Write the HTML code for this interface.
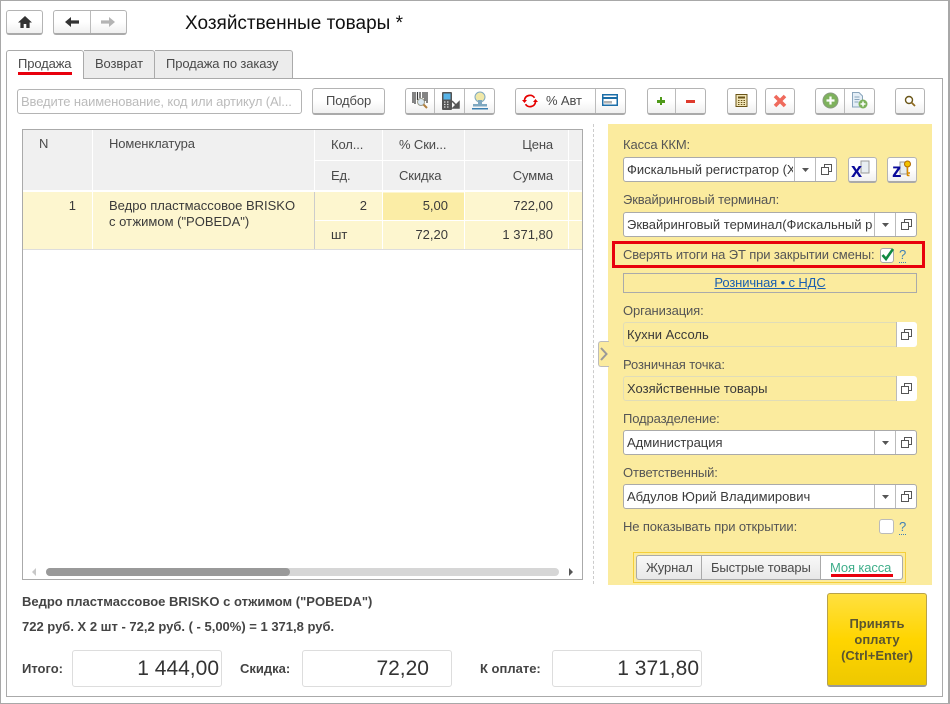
<!DOCTYPE html>
<html lang="ru"><head><meta charset="utf-8"><title>Хозяйственные товары</title>
<style>
html,body{margin:0;padding:0;background:#fff}
#p{position:relative;width:950px;height:704px;overflow:hidden;background:#fff;font:13px "Liberation Sans",sans-serif;color:#4a4a4a}
#p div,#p svg{position:absolute;box-sizing:border-box}
.t{white-space:nowrap;line-height:14px;letter-spacing:-.12px}
.b{border:1px solid #b4b4b4;border-bottom:2px solid #aaa;border-radius:3px;background:linear-gradient(#fff,#fff 50%,#f0f0f0)}
.s{width:1px;background:#bbb}
.f{background:#fff;border:1px solid #aaa;border-radius:3px}
.l{color:#555}
.th{background:#f0f0f0}
#p .c{color:#3a3a3a;letter-spacing:0}
.r{text-align:right}
#p .bd{font-weight:700;color:#444;letter-spacing:0}
#p .n{font-size:21px;line-height:22px;color:#333;letter-spacing:0;text-align:right}
</style></head><body><div id="p">
<div style="left:0;top:0;width:950px;height:704px;border:1px solid #a8a8a8;border-width:1px 2px 1px 1px"></div>

<div class="b" style="left:6px;top:10px;width:37px;height:25px"></div>
<svg style="left:17px;top:15px" width="16" height="14" viewBox="0 0 16 14"><path d="M8 1 L15 7.5 H12.6 V13 H9.3 V9 H6.7 V13 H3.4 V7.5 H1 Z" fill="#333"/></svg>
<div class="b" style="left:53px;top:10px;width:74px;height:25px"></div>
<div class="s" style="left:90px;top:11px;height:22px"></div>
<svg style="left:64px;top:16px" width="16" height="12" viewBox="0 0 16 12"><path d="M1 6 L7 1 V4.4 H15 V7.6 H7 V11 Z" fill="#333"/></svg>
<svg style="left:100px;top:16px" width="16" height="12" viewBox="0 0 16 12"><path d="M15 6 L9 1 V4.4 H1 V7.6 H9 V11 Z" fill="#b4b4b4"/></svg>
<div class="t" style="left:185px;top:13px;font-size:19px;line-height:22px;color:#111;letter-spacing:0">Хозяйственные товары *</div>

<div style="left:6px;top:78px;width:937px;height:619px;border:1px solid #aaa"></div>
<div style="left:6px;top:50px;width:78px;height:29px;background:#fff;border:1px solid #aaa;border-bottom:none;border-radius:3px 3px 0 0"></div>
<div style="left:84px;top:50px;width:71px;height:28px;background:#ececec;border:1px solid #aaa;border-bottom:none;border-left:none;border-radius:0 3px 0 0"></div>
<div style="left:155px;top:50px;width:138px;height:28px;background:#ececec;border:1px solid #aaa;border-bottom:none;border-left:none;border-radius:0 3px 0 0"></div>
<div class="t" style="left:18px;top:57px">Продажа</div>
<div style="left:18px;top:72px;width:54px;height:3px;background:#e8000d"></div>
<div class="t" style="left:95px;top:57px">Возврат</div>
<div class="t" style="left:166px;top:57px">Продажа по заказу</div>

<div class="f" style="left:17px;top:89px;width:285px;height:25px;border-color:#b4b4b4"></div>
<div class="t" style="left:21px;top:95px;color:#bbb">Введите наименование, код или артикул (Al...</div>
<div class="b" style="left:312px;top:88px;width:73px;height:27px"></div>
<div class="t" style="left:326px;top:94px">Подбор</div>

<div class="b" style="left:405px;top:88px;width:90px;height:27px"></div>
<div class="s" style="left:434px;top:89px;height:24px"></div><div class="s" style="left:464px;top:89px;height:24px"></div>
<svg style="left:412px;top:92px" width="17" height="18" viewBox="0 0 17 18"><path d="M1 0v11M3 0v12M5.500 0v8M8 0v6M11 0v6M13 0v9M15 0v11" stroke="#333" stroke-width="1.200"/><circle cx="9" cy="10" r="3.500" fill="#dbe8f2" stroke="#9a9a8a"/><path d="M11.500 12.500L15 16" stroke="#b08040" stroke-width="2"/></svg>
<svg style="left:441px;top:92px" width="20" height="19" viewBox="0 0 20 19"><rect x="1" y="0" width="10" height="18" rx="1" fill="#555"/><rect x="2.500" y="1.500" width="7" height="6" fill="#58b4e8"/><path d="M3 10h1.500M6 10h1.500M3 12.500h1.500M6 12.500h1.500M3 15h1.500M6 15h1.500" stroke="#ddd" stroke-width="1.200"/><path d="M11 9l5 5M18 10v6h-6z" stroke="#555" stroke-width="1.500" fill="#555"/></svg>
<svg style="left:472px;top:91px" width="16" height="19" viewBox="0 0 16 19"><ellipse cx="8" cy="6" rx="5" ry="5" fill="#f0e8a8" stroke="#7fa8c0"/><rect x="6" y="9" width="4" height="4" fill="#7fa8c0"/><rect x="1" y="13" width="14" height="2.500" fill="#7fa8c0"/><rect x="0" y="17" width="16" height="1.500" fill="#3a7fb0"/></svg>

<div class="b" style="left:515px;top:88px;width:111px;height:27px"></div>
<div class="s" style="left:595px;top:89px;height:24px"></div>
<svg style="left:522px;top:93px" width="16" height="16" viewBox="0 0 16 16"><path d="M2.500 7A5.500 5.500 0 0 1 12.500 4.800M13.500 9A5.500 5.500 0 0 1 3.500 11.200" fill="none" stroke="#e60000" stroke-width="1.700"/><path d="M0 7h5L2.500 10zM16 9h-5l2.500-3z" fill="#e60000"/></svg>
<div class="t" style="left:546px;top:94px">% Авт</div>
<svg style="left:602px;top:94px" width="16" height="13" viewBox="0 0 16 13"><rect x=".75" y=".75" width="14.500" height="10.500" fill="#fff" stroke="#1c6ea8" stroke-width="1.500"/><rect x="1" y="3" width="14" height="2" fill="#1c6ea8"/><path d="M3 7v2.500M5 7v2.500M7 7v2.500M9 7v2.500" stroke="#666"/></svg>

<div class="b" style="left:647px;top:88px;width:59px;height:27px"></div>
<div class="s" style="left:675px;top:89px;height:24px"></div>
<div style="left:657px;top:100px;width:8px;height:2.500px;background:#4f9a1a"></div><div style="left:659.700px;top:97px;width:2.500px;height:8px;background:#4f9a1a"></div>
<div style="left:686px;top:100px;width:9px;height:2.500px;background:#de3a2c"></div>

<div class="b" style="left:727px;top:88px;width:30px;height:27px"></div>
<svg style="left:735px;top:94px" width="14" height="14" viewBox="0 0 14 14"><rect x="1" y=".5" width="11" height="12" fill="#f2e6b8" stroke="#6a5418"/><rect x="3" y="2.500" width="7" height="2" fill="#6a5418"/><path d="M3 6.500h1.500M5.800 6.500h1.500M8.500 6.500H10M3 8.500h1.500M5.800 8.500h1.500M8.500 8.500H10M3 10.500h1.500M5.800 10.500h1.500M8.500 10.500H10" stroke="#6a5418"/></svg>
<div class="b" style="left:765px;top:88px;width:30px;height:27px"></div>
<svg style="left:773px;top:94px" width="14" height="14" viewBox="0 0 14 14"><path d="M2 2L12 12M12 2L2 12" stroke="#ef6a5c" stroke-width="3.600"/></svg>

<div class="b" style="left:815px;top:88px;width:60px;height:27px"></div>
<div class="s" style="left:844px;top:89px;height:24px"></div>
<svg style="left:822px;top:92px" width="17" height="17" viewBox="0 0 17 17"><circle cx="8.500" cy="8.500" r="7.500" fill="#7eb25c" stroke="#8a9a80"/><path d="M8.500 4.500v8M4.500 8.500h8" stroke="#fff" stroke-width="2.200"/></svg>
<svg style="left:851px;top:92px" width="17" height="17" viewBox="0 0 17 17"><path d="M1.500.5H8L11.500 4V15H1.500Z" fill="#e4eef6" stroke="#8aa5bc"/><path d="M3.500 5h5M3.500 7.500h5M3.500 10h4" stroke="#8aa5bc"/><circle cx="12" cy="12" r="4.500" fill="#7eb25c"/><path d="M12 9.500v5M9.500 12h5" stroke="#fff" stroke-width="1.500"/></svg>
<div class="b" style="left:895px;top:88px;width:30px;height:27px"></div>
<svg style="left:904px;top:95px" width="12" height="12" viewBox="0 0 12 12"><circle cx="5" cy="5" r="3.500" fill="none" stroke="#6a5618" stroke-width="1.400"/><path d="M7.500 7.500L11 11" stroke="#8f6a20" stroke-width="1.800"/></svg>

<div style="left:22px;top:129px;width:561px;height:451px;border:1px solid #aaa"></div>
<div class="th" style="left:23px;top:130px;width:69px;height:60px"></div>
<div class="th" style="left:93px;top:130px;width:221px;height:60px"></div>
<div class="th" style="left:315px;top:130px;width:67px;height:30px"></div><div class="th" style="left:315px;top:161px;width:67px;height:29px"></div>
<div class="th" style="left:383px;top:130px;width:81px;height:30px"></div><div class="th" style="left:383px;top:161px;width:81px;height:29px"></div>
<div class="th" style="left:465px;top:130px;width:103px;height:30px"></div><div class="th" style="left:465px;top:161px;width:103px;height:29px"></div>
<div class="th" style="left:569px;top:130px;width:13px;height:30px"></div><div class="th" style="left:569px;top:161px;width:13px;height:29px"></div>
<div style="left:23px;top:192px;width:559px;height:57px;background:#fdf6cf"></div>
<div style="left:23px;top:249px;width:559px;height:1px;background:#ddd"></div>
<div style="left:92px;top:192px;width:1px;height:57px;background:#fff"></div>
<div style="left:314px;top:192px;width:1px;height:57px;background:#ccc"></div>
<div style="left:382px;top:192px;width:1px;height:57px;background:#fff"></div>
<div style="left:464px;top:192px;width:1px;height:57px;background:#fff"></div>
<div style="left:568px;top:192px;width:1px;height:57px;background:#fff"></div>
<div style="left:315px;top:220px;width:267px;height:1px;background:#fff"></div>
<div style="left:383px;top:193px;width:81px;height:27px;background:#fbeda6"></div>
<div class="t" style="left:39px;top:137px">N</div>
<div class="t" style="left:109px;top:137px">Номенклатура</div>
<div class="t" style="left:331px;top:138px">Кол...</div>
<div class="t" style="left:399px;top:138px">% Ски...</div>
<div class="t r" style="left:465px;width:88px;top:138px">Цена</div>
<div class="t" style="left:331px;top:169px">Ед.</div>
<div class="t" style="left:399px;top:169px">Скидка</div>
<div class="t r" style="left:465px;width:88px;top:169px">Сумма</div>
<div class="t c r" style="left:23px;width:53px;top:199px">1</div>
<div class="t c" style="left:109px;top:199px">Ведро пластмассовое BRISKO</div>
<div class="t c" style="left:109px;top:215px">с отжимом ("POBEDA")</div>
<div class="t c r" style="left:315px;width:52px;top:199px">2</div>
<div class="t c r" style="left:383px;width:65px;top:199px">5,00</div>
<div class="t c r" style="left:465px;width:88px;top:199px">722,00</div>
<div class="t c" style="left:331px;top:228px">шт</div>
<div class="t c r" style="left:383px;width:65px;top:228px">72,20</div>
<div class="t c r" style="left:465px;width:88px;top:228px">1 371,80</div>
<div style="left:46px;top:568px;width:513px;height:8px;border-radius:4px;background:#d6d6d6"></div>
<div style="left:46px;top:568px;width:244px;height:8px;border-radius:4px;background:#999"></div>
<svg style="left:32px;top:568px" width="5" height="8"><path d="M4 0V8L0 4Z" fill="#c8c8c8"/></svg>
<svg style="left:569px;top:568px" width="5" height="8"><path d="M0 0V8L4 4Z" fill="#555"/></svg>

<div style="left:593px;top:124px;width:0;height:460px;border-left:1px dashed #ccc"></div>
<div style="left:608px;top:124px;width:324px;height:461px;background:#fbeb9e"></div>
<div style="left:598px;top:341px;width:11px;height:26px;background:#fbeb9e;border:1px solid #bbb;border-right:none;border-radius:3px 0 0 3px"></div>
<svg style="left:600px;top:347px" width="8" height="14"><path d="M1 1L6.500 7L1 13" fill="none" stroke="#999" stroke-width="2"/></svg>

<div class="t l" style="left:623px;top:138px">Касса ККМ:</div>
<div class="f" style="left:623px;top:157px;width:214px;height:25px"></div>
<div class="t c" style="left:627px;top:163px;width:166px;overflow:hidden">Фискальный регистратор (ХЗ)</div>
<div class="s" style="left:794px;top:158px;height:23px"></div><div class="s" style="left:815px;top:158px;height:23px"></div>
<svg style="left:802px;top:168px" width="7" height="4"><path d="M0 0H7L3.500 4Z" fill="#555"/></svg>
<svg style="left:821px;top:164px" width="11" height="11"><path d="M3.500 3.500V.5H10.500V7.500H7.500M.5 3.500H7.500V10.500H.5Z" fill="#fff" stroke="#555"/></svg>
<div class="b" style="left:848px;top:157px;width:29px;height:26px"></div>
<svg style="left:851px;top:160px" width="22" height="19" viewBox="0 0 22 19"><path d="M10 1h8v12H10z" fill="#e8eef2" stroke="#999"/><text x="0" y="17" font-family="Liberation Sans" font-weight="700" font-size="20" fill="#0a0a9a">x</text></svg>
<div class="b" style="left:887px;top:157px;width:30px;height:26px"></div>
<svg style="left:892px;top:160px" width="21" height="19" viewBox="0 0 21 19"><path d="M8 2h7v12H8z" fill="#e8eef2" stroke="#999"/><text x="0" y="17" font-family="Liberation Sans" font-weight="700" font-size="19" fill="#0a0a9a">z</text><circle cx="15.500" cy="4" r="3" fill="#f3c200" stroke="#b06a00"/><path d="M15.500 7v9M15.500 13h2.500M15.500 15.500h2" stroke="#d88a00" stroke-width="1.500"/></svg>

<div class="t l" style="left:623px;top:193px">Эквайринговый терминал:</div>
<div class="f" style="left:623px;top:212px;width:294px;height:25px"></div>
<div class="t c" style="left:627px;top:218px;width:246px;overflow:hidden">Эквайринговый терминал(Фискальный рег</div>
<div class="s" style="left:874px;top:213px;height:23px"></div><div class="s" style="left:895px;top:213px;height:23px"></div>
<svg style="left:882px;top:223px" width="7" height="4"><path d="M0 0H7L3.500 4Z" fill="#555"/></svg>
<svg style="left:901px;top:219px" width="11" height="11"><path d="M3.500 3.500V.5H10.500V7.500H7.500M.5 3.500H7.500V10.500H.5Z" fill="#fff" stroke="#555"/></svg>

<div style="left:612px;top:241px;width:313px;height:27px;border:3px solid #e8000d"></div>
<div class="t l" style="left:623px;top:248px">Сверять итоги на ЭТ при закрытии смены:</div>
<div class="f" style="left:880px;top:248px;width:14px;height:15px"></div>
<svg style="left:880px;top:246px" width="15" height="16" viewBox="0 0 15 16"><path d="M2.500 9L6 13L13 3" fill="none" stroke="#118a42" stroke-width="2.600"/></svg>
<div class="t" style="left:899px;top:247px;color:#3f7fb5;border-bottom:1px dotted #3f7fb5;line-height:15px">?</div>

<div style="left:623px;top:273px;width:294px;height:20px;border:1px solid #aaa"></div>
<div class="t" style="left:623px;width:294px;text-align:center;top:276px;color:#1a5fb0;text-decoration:underline">Розничная • с НДС</div>

<div class="t l" style="left:623px;top:304px">Организация:</div>
<div style="left:623px;top:322px;width:294px;height:25px;border:1px solid #e0dcb8;border-radius:3px;background:#fbeb9e"></div>
<div style="left:896px;top:322px;width:21px;height:25px;background:#fff;border-radius:0 3px 3px 0;border-left:1px solid #bbb"></div>
<div class="t c" style="left:627px;top:328px">Кухни Ассоль</div>
<svg style="left:901px;top:329px" width="11" height="11"><path d="M3.500 3.500V.5H10.500V7.500H7.500M.5 3.500H7.500V10.500H.5Z" fill="#fff" stroke="#555"/></svg>

<div class="t l" style="left:623px;top:358px">Розничная точка:</div>
<div style="left:623px;top:376px;width:294px;height:25px;border:1px solid #e0dcb8;border-radius:3px;background:#fbeb9e"></div>
<div style="left:896px;top:376px;width:21px;height:25px;background:#fff;border-radius:0 3px 3px 0;border-left:1px solid #bbb"></div>
<div class="t c" style="left:627px;top:382px">Хозяйственные товары</div>
<svg style="left:901px;top:383px" width="11" height="11"><path d="M3.500 3.500V.5H10.500V7.500H7.500M.5 3.500H7.500V10.500H.5Z" fill="#fff" stroke="#555"/></svg>

<div class="t l" style="left:623px;top:412px">Подразделение:</div>
<div class="f" style="left:623px;top:430px;width:294px;height:25px"></div>
<div class="t c" style="left:627px;top:436px">Администрация</div>
<div class="s" style="left:874px;top:431px;height:23px"></div><div class="s" style="left:895px;top:431px;height:23px"></div>
<svg style="left:882px;top:441px" width="7" height="4"><path d="M0 0H7L3.500 4Z" fill="#555"/></svg>
<svg style="left:901px;top:437px" width="11" height="11"><path d="M3.500 3.500V.5H10.500V7.500H7.500M.5 3.500H7.500V10.500H.5Z" fill="#fff" stroke="#555"/></svg>

<div class="t l" style="left:623px;top:466px">Ответственный:</div>
<div class="f" style="left:623px;top:484px;width:294px;height:25px"></div>
<div class="t c" style="left:627px;top:490px">Абдулов Юрий Владимирович</div>
<div class="s" style="left:874px;top:485px;height:23px"></div><div class="s" style="left:895px;top:485px;height:23px"></div>
<svg style="left:882px;top:495px" width="7" height="4"><path d="M0 0H7L3.500 4Z" fill="#555"/></svg>
<svg style="left:901px;top:491px" width="11" height="11"><path d="M3.500 3.500V.5H10.500V7.500H7.500M.5 3.500H7.500V10.500H.5Z" fill="#fff" stroke="#555"/></svg>

<div class="t l" style="left:623px;top:520px">Не показывать при открытии:</div>
<div style="left:879px;top:519px;width:15px;height:15px;background:#fff;border:1px solid #bbb;border-radius:3px"></div>
<div class="t" style="left:899px;top:519px;color:#3f7fb5;border-bottom:1px dotted #3f7fb5;line-height:15px">?</div>

<div style="left:633px;top:552px;width:273px;height:31px;border:1px solid #f5cf3a"></div>
<div style="left:636px;top:555px;width:267px;height:25px;border:1px solid #aaa;border-radius:3px;background:linear-gradient(#f8f8f8,#e8e8e8)"></div>
<div style="left:820px;top:556px;width:82px;height:23px;background:#fff;border-radius:0 3px 3px 0;border-left:1px solid #aaa"></div>
<div class="s" style="left:701px;top:556px;height:23px;background:#aaa"></div>
<div class="t" style="left:646px;top:561px">Журнал</div>
<div class="t" style="left:711px;top:561px">Быстрые товары</div>
<div class="t" style="left:830px;top:561px;color:#3fae8a">Моя касса</div>
<div style="left:831px;top:574px;width:62px;height:3px;background:#e8000d"></div>

<div class="t bd" style="left:22px;top:595px">Ведро пластмассовое BRISKO с отжимом ("POBEDA")</div>
<div class="t bd" style="left:22px;top:620px">722 руб. Х 2 шт - 72,2 руб. ( - 5,00%) = 1 371,8 руб.</div>
<div class="t bd" style="left:22px;top:662px">Итого:</div>
<div style="left:72px;top:650px;width:150px;height:37px;border:1px solid #ddd;border-radius:3px"></div>
<div class="t n" style="left:72px;width:147px;top:658px">1 444,00</div>
<div class="t bd" style="left:240px;top:662px">Скидка:</div>
<div style="left:302px;top:650px;width:150px;height:37px;border:1px solid #ddd;border-radius:3px"></div>
<div class="t n" style="left:302px;width:127px;top:658px">72,20</div>
<div class="t bd" style="left:480px;top:662px">К оплате:</div>
<div style="left:552px;top:650px;width:150px;height:37px;border:1px solid #ddd;border-radius:3px"></div>
<div class="t n" style="left:552px;width:147px;top:658px">1 371,80</div>

<div style="left:827px;top:593px;width:100px;height:94px;border:1px solid #b8a24a;border-bottom:2px solid #999;border-radius:3px;background:linear-gradient(#ffe040,#ffd500 50%,#eec800)"></div>
<div class="t" style="left:827px;width:100px;text-align:center;top:616px;font-weight:700;color:#5a5530;line-height:16px;white-space:normal;letter-spacing:0">Принять<br>оплату<br>(Ctrl+Enter)</div>
</div></body></html>
